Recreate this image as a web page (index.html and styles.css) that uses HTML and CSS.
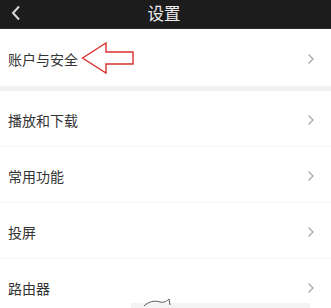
FILE: index.html
```html
<!DOCTYPE html>
<html lang="zh-CN">
<head>
<meta charset="utf-8">
<title>设置</title>
<link rel="stylesheet" href="styles.css">
</head>
<body>
<div class="page">
  <header class="topbar">
    <svg class="back" width="12" height="16" viewBox="0 0 12 16"><path d="M9 1.5 L3 8 L9 14.5" fill="none" stroke="#d8d8d8" stroke-width="2"/></svg>
    <h1 class="title">设置</h1>
  </header>
  <ul class="list">
    <li class="row row-first">
      <span class="label">账户与安全</span>
      <svg class="mark" width="54" height="34" viewBox="0 0 54 34"><polygon points="1.5,17 25,2 25,11 52,11 52,23 25,23 25,32" fill="#fff" stroke="#d8322e" stroke-width="1.4" stroke-linejoin="miter"/></svg>
      <span class="chev"><svg width="8" height="12" viewBox="0 0 8 12"><path d="M1.5 1.5 L6 6 L1.5 10.5" fill="none" stroke="#a8a8a8" stroke-width="1.3"/></svg></span>
    </li>
    <li class="gap"></li>
    <li class="row"><span class="label">播放和下载</span><span class="chev"><svg width="8" height="12" viewBox="0 0 8 12"><path d="M1.5 1.5 L6 6 L1.5 10.5" fill="none" stroke="#a8a8a8" stroke-width="1.3"/></svg></span></li>
    <li class="sep"></li>
    <li class="row"><span class="label">常用功能</span><span class="chev"><svg width="8" height="12" viewBox="0 0 8 12"><path d="M1.5 1.5 L6 6 L1.5 10.5" fill="none" stroke="#a8a8a8" stroke-width="1.3"/></svg></span></li>
    <li class="sep"></li>
    <li class="row"><span class="label">投屏</span><span class="chev"><svg width="8" height="12" viewBox="0 0 8 12"><path d="M1.5 1.5 L6 6 L1.5 10.5" fill="none" stroke="#a8a8a8" stroke-width="1.3"/></svg></span></li>
    <li class="sep"></li>
    <li class="row"><span class="label">路由器</span><span class="chev"><svg width="8" height="12" viewBox="0 0 8 12"><path d="M1.5 1.5 L6 6 L1.5 10.5" fill="none" stroke="#a8a8a8" stroke-width="1.3"/></svg></span></li>
  </ul>
  <div class="peek">
    <svg class="peek-curve" width="40" height="10" viewBox="0 0 40 10"><path d="M8 9 C12 5, 18 3, 24 5 C28 6, 31 4, 33 2 L34 8" fill="none" stroke="#555" stroke-width="1"/></svg>
  </div>
</div>
</body>
</html>
```

FILE: styles.css
```css
* { box-sizing: border-box; }
html, body { margin: 0; padding: 0; background: #fff; }
body {
  font-family: "Noto Sans CJK SC", "Noto Sans", sans-serif;
  overflow: hidden;
}
.page {
  position: relative;
  width: 331px;
  height: 308px;
  overflow: hidden;
  background: #fff;
}
.topbar {
  height: 29px;
  background: #1c1c1c;
  border-bottom: 1px solid #2a2a2a;
  display: flex;
  align-items: center;
  position: relative;
}
.back {
  margin-left: 10px;
  margin-top: -2px;
}
.title {
  position: absolute;
  left: 0;
  right: 0;
  top: 0;
  margin: 0;
  text-align: center;
  font-size: 16.5px;
  font-weight: 400;
  line-height: 26px;
  color: #f0f0f0;
  padding-right: 3px;
}
.list {
  list-style: none;
  margin: 0;
  padding: 0;
}
.row {
  height: 55px;
  display: flex;
  align-items: center;
  padding: 3px 16px 0 8px;
}
.row-first {
  height: 57px;
}
.label {
  font-size: 14px;
  color: #333;
  letter-spacing: 0;
}
.mark {
  margin-left: 3px;
  margin-top: -3px;
}
.chev {
  margin-left: auto;
  display: flex;
}
.gap {
  height: 5px;
  background: #f2f2f2;
}
.sep {
  height: 1px;
  background: #f5f5f5;
}
.peek {
  position: absolute;
  left: 131px;
  top: 303px;
  width: 179px;
  height: 8px;
  background: #f3f3f3;
}
.peek-curve {
  position: absolute;
  left: 5px;
  top: -6px;
}
```
